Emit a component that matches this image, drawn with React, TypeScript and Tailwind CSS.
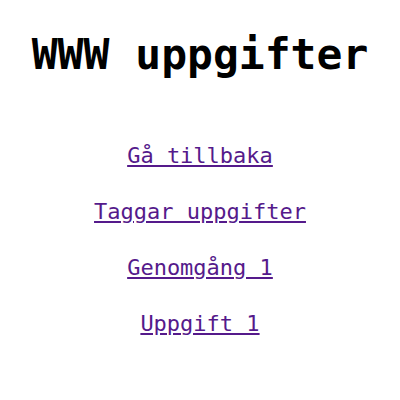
export default function App() {
  const links = ["Gå tillbaka", "Taggar uppgifter", "Genomgång 1", "Uppgift 1"];
  return (
    <div className="w-[400px] h-[400px] bg-white flex flex-col items-center" style={{ fontFamily: '"DejaVu Sans Mono", "Liberation Mono", monospace' }}>
      <h1 className="mt-[24px] text-[43px] leading-[60px] font-bold text-black">WWW uppgifter</h1>
      <div className="mt-[44px] flex flex-col items-center">
        {links.map((l) => (
          <a key={l} href="#" className="block text-[22px] leading-[56px] text-[#551a8b] underline">
            {l}
          </a>
        ))}
      </div>
    </div>
  );
}
